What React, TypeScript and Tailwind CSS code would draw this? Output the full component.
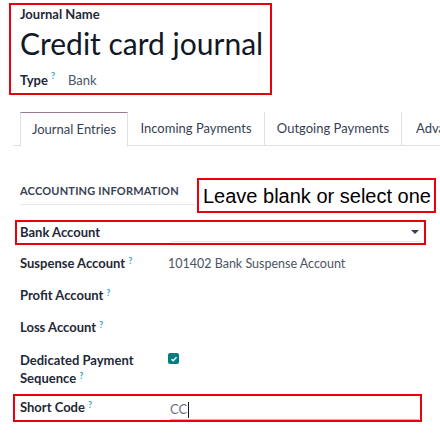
import React from 'react'

const font = { fontFamily: 'Lato, "Open Sans", sans-serif' }

function Help() {
  return <sup className="ml-[3px] text-[9px] font-bold text-[#3aa0c8]">?</sup>
}

function Row({ label, help = true, children }: { label: string; help?: boolean; children?: React.ReactNode }) {
  return (
    <div className="flex h-[32px] items-center">
      <div className="w-[148px] text-[13px] font-bold text-[#1f2937]">
        {label}
        {help && <Help />}
      </div>
      <div className="flex-1 text-[12.5px] text-[#4b5563]">{children}</div>
    </div>
  )
}

export default function App() {
  return (
    <div className="h-[435px] w-[440px] overflow-hidden bg-white" style={font}>
      {/* title block */}
      <div className="ml-[9px] mt-[3px] h-[92px] w-[263px] border-2 border-[#e8000b] px-[9px]">
        <div className="text-[13px] font-bold leading-[18px] text-[#1f2937]">Journal Name</div>
        <div className="mt-[1px] whitespace-nowrap text-[30px] leading-[38px] text-[#111827]">Credit card journal</div>
        <div className="mt-[9px] flex items-center text-[13px] leading-[18px]">
          <span className="font-bold text-[#1f2937]">Type</span>
          <Help />
          <span className="ml-[13px] text-[#4b5563]">Bank</span>
        </div>
      </div>

      {/* tabs */}
      <div className="ml-[13px] mt-[17px] flex h-[34px] border-b border-[#dee2e6] text-[13px] text-[#374151]">
        <div className="ml-[7px] flex h-[35px] w-[108px] shrink-0 items-center justify-center border-x border-t border-[#dee2e6] border-t-[#9a7a93] bg-white">
          Journal Entries
        </div>
        <div className="flex h-[34px] w-[137px] shrink-0 items-center justify-center border-r border-[#dee2e6]">Incoming Payments</div>
        <div className="flex h-[34px] w-[137px] shrink-0 items-center justify-center border-r border-[#dee2e6]">Outgoing Payments</div>
        <div className="flex h-[34px] items-center whitespace-nowrap pl-[14px]">Advanced</div>
      </div>

      {/* section header */}
      <div className="mt-[32px] flex h-[35px] items-start">
        <div className="ml-[20px] mt-[5px] w-[175px] border-b border-[#e5e7eb] pb-[4px] text-[11px] font-bold tracking-[0.2px] text-[#374151]">
          ACCOUNTING INFORMATION
        </div>
        <div
          className="ml-[2px] flex h-[35px] w-[239px] items-center border-2 border-[#e8000b] pl-[4px] text-[20px] text-black"
          style={{ fontFamily: '"Liberation Sans", "Noto Sans", sans-serif' }}
        >
          Leave blank or select one
        </div>
      </div>

      {/* bank account */}
      <div className="ml-[15px] mt-[7px] flex h-[25px] w-[411px] items-center border-2 border-[#e8000b] pl-[3px]">
        <div className="w-[150px] text-[13px] font-bold text-[#1f2937]">Bank Account</div>
        <div className="mr-[3px] flex h-[18px] flex-1 items-start justify-end border-b border-[#e5e7eb] pr-[2px]">
          <span className="mt-[6px] h-0 w-0 border-x-[4px] border-t-[4px] border-x-transparent border-t-[#374151]" />
        </div>
      </div>

      <div className="ml-[20px] mt-[3px]">
        <Row label="Suspense Account">101402 Bank Suspense Account</Row>
        <Row label="Profit Account" />
        <Row label="Loss Account" />
        <div className="mt-[7px] flex h-[42px] items-start">
          <div className="w-[148px] text-[13px] font-bold leading-[18px] text-[#1f2937]">
            Dedicated Payment
            <br />
            Sequence
            <Help />
          </div>
          <div className="mt-[2px] flex h-[11px] w-[11px] items-center justify-center rounded-[2px] bg-[#017e84]">
            <svg width="8" height="8" viewBox="0 0 8 8">
              <path d="M1.5 4.2 L3.2 5.8 L6.5 2.3" stroke="white" strokeWidth="1.5" fill="none" />
            </svg>
          </div>
        </div>
      </div>

      {/* short code */}
      <div className="ml-[13px] mt-[1px] flex h-[28px] w-[409px] items-center border-2 border-[#e8000b] pl-[5px]">
        <div className="w-[150px] text-[13px] font-bold text-[#1f2937]">
          Short Code
          <Help />
        </div>
        <div className="mr-[1px] mt-[4px] flex h-[20px] flex-1 items-center border-b border-[#b0bcc8] text-[13px] text-[#6b7280]">
          CC<span className="ml-[1px] h-[16px] w-px bg-[#111827]" />
        </div>
      </div>
    </div>
  )
}
